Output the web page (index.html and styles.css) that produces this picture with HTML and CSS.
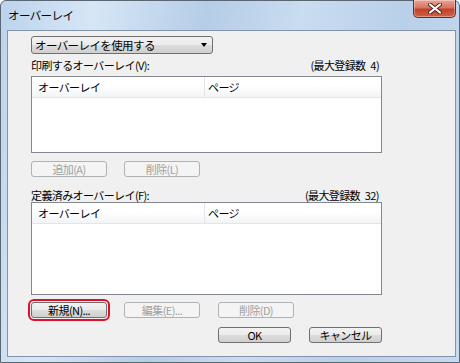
FILE: index.html
```html
<!DOCTYPE html>
<html lang="ja">

<head>
    <meta charset="UTF-8">
    <meta name="viewport" content="width=device-width, initial-scale=1.0">
    <title>オーバーレイ</title>
    <link rel="stylesheet" href="styles.css">
</head>

<body>
    <div class="window">
        <div class="titlebar">
            <span class="title">オーバーレイ</span>
            <div class="close">
                <svg width="14" height="11" viewBox="0 0 14 11">
                    <path d="M2 1.5 L12 9.5 M12 1.5 L2 9.5" stroke="#4a2620" stroke-width="4" stroke-linecap="round" />
                    <path d="M2 1.5 L12 9.5 M12 1.5 L2 9.5" stroke="#fff" stroke-width="2.2" stroke-linecap="round" />
                </svg>
            </div>
        </div>
        <div class="client">
            <div class="content">
                <div class="combo">
                    <span>オーバーレイを使用する</span>
                    <span class="arrow"></span>
                </div>

                <div class="label-row row-print">
                    <span>印刷するオーバーレイ(V):</span>
                    <span class="max">(最大登録数 4)</span>
                </div>
                <div class="list list-print">
                    <div class="list-head">
                        <div class="col col-name">オーバーレイ</div>
                        <div class="col col-page">ページ</div>
                    </div>
                </div>
                <div class="btn-row row-gap-8">
                    <button class="btn" disabled>追加(A)</button>
                    <button class="btn" disabled>削除(L)</button>
                </div>

                <div class="label-row row-defined">
                    <span>定義済みオーバーレイ(F):</span>
                    <span class="max">(最大登録数 32)</span>
                </div>
                <div class="list list-defined">
                    <div class="list-head">
                        <div class="col col-name">オーバーレイ</div>
                        <div class="col col-page">ページ</div>
                    </div>
                </div>
                <div class="btn-row row-gap-7">
                    <button class="btn marked">新規(N)...</button>
                    <button class="btn" disabled>編集(E)...</button>
                    <button class="btn" disabled>削除(D)</button>
                </div>
                <div class="btn-row row-gap-9 row-right">
                    <button class="btn">OK</button>
                    <button class="btn">キャンセル</button>
                </div>
            </div>
        </div>
    </div>
</body>

</html>
```

FILE: styles.css
```css
* {
    margin: 0;
    padding: 0;
    box-sizing: border-box;
}

body {
    width: 460px;
    height: 363px;
    overflow: hidden;
    background: #fff;
    font-family: "Noto Sans CJK JP", "Noto Sans", sans-serif;
    font-size: 11px;
    letter-spacing: -0.6px;
    color: #000;
}

.window {
    width: 460px;
    height: 363px;
    border: 1px solid #5b6673;
    border-radius: 6px 6px 0 0;
    background: linear-gradient(100deg, #bcd3ec 0%, #d6e6f6 18%, #b5cde7 40%, #c9dcf0 58%, #b9d0ea 78%, #c6daef 100%);
    display: flex;
    flex-direction: column;
}

.titlebar {
    height: 29px;
    display: flex;
    justify-content: space-between;
    align-items: flex-start;
    padding-left: 7px;
}

.title {
    margin-top: 7px;
    font-size: 11.5px;
    line-height: 14px;
    color: #000;
}

.close {
    width: 43px;
    height: 18px;
    margin-right: 3px;
    margin-top: -1px;
    border: 1px solid #6b2a1e;
    border-top: none;
    border-radius: 0 0 5px 5px;
    background: linear-gradient(#e9a496 0%, #d9735f 45%, #c2412a 55%, #d0614a 100%);
    box-shadow: inset 0 0 0 1px rgba(255, 255, 255, 0.35);
    display: flex;
    align-items: center;
    justify-content: center;
}

.client {
    margin: 0 3px 5px 6px;
    flex: 1;
    border: 1px solid #8293aa;
    background: #f0f0f0;
}

.content {
    width: 374px;
    padding: 5px 0 0 23px;
}

.combo {
    width: 182px;
    height: 18px;
    border: 1px solid #707070;
    border-radius: 3px;
    background: linear-gradient(#f2f2f2 0%, #ebebeb 50%, #dddddd 51%, #cfcfcf 100%);
    display: flex;
    align-items: center;
    justify-content: space-between;
    padding: 0 5px 0 3px;
    font-size: 11.5px;
    line-height: 14px;
}

.arrow {
    width: 0;
    height: 0;
    border-left: 3.5px solid transparent;
    border-right: 3.5px solid transparent;
    border-top: 4px solid #000;
}

.label-row {
    width: 351px;
    height: 12px;
    line-height: 12px;
    display: flex;
    justify-content: space-between;
    padding-right: 3px;
}

.max {
    word-spacing: 3px;
}

.row-print {
    margin-top: 5px;
}

.row-defined {
    margin-top: 12px;
}

.list {
    width: 351px;
    border: 1px solid #828790;
    background: #fff;
}

.list-print {
    margin-top: 5px;
    height: 77px;
}

.list-defined {
    margin-top: 1px;
    height: 93px;
}

.list-head {
    height: 21px;
    display: flex;
    background: linear-gradient(#ffffff 0%, #ffffff 40%, #f3f4f6 100%);
    border-bottom: 1px solid #e3e5e8;
}

.col {
    line-height: 20px;
    padding-left: 6px;
}

.col-name {
    width: 173px;
    border-right: 1px solid #e3e5e8;
}

.col-page {
    flex: 1;
    padding-left: 3px;
}

.btn-row {
    display: flex;
    gap: 17px;
}

.row-gap-8 {
    margin-top: 8px;
}

.row-gap-7 {
    margin-top: 7px;
}

.row-gap-9 {
    margin-top: 9px;
}

.row-right {
    padding-left: 187px;
    gap: 18px;
}

.btn {
    width: 76px;
    height: 16px;
    border: 1px solid #707070;
    border-radius: 3px;
    background: linear-gradient(#f2f2f2 0%, #ebebeb 50%, #dddddd 51%, #cfcfcf 100%);
    font-family: inherit;
    font-size: 11px;
    letter-spacing: -0.6px;
    line-height: 13px;
    color: #000;
    text-align: center;
}

.btn:disabled {
    border-color: #adb2b5;
    background: #f4f4f4;
    color: #a0a0a0;
}

.btn-row .btn:nth-child(3) {
    margin-left: 1px;
}

.marked {
    outline: 2px solid #e0102a;
    outline-offset: 1px;
}
```
